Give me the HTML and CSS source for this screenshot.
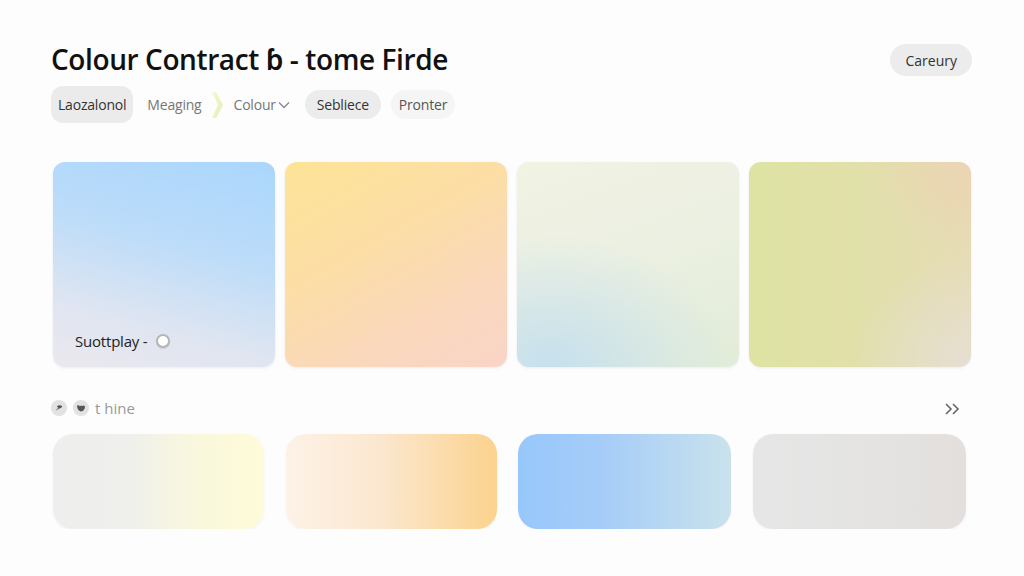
FILE: index.html
```html
<!DOCTYPE html>
<html lang="en">
<head>
<meta charset="UTF-8">
<meta name="viewport" content="width=device-width, initial-scale=1.0">
<title>Colour Contract</title>
<link rel="stylesheet" href="styles.css">
</head>
<body>
<div class="page">
    <div class="header">
        <h1>Colour Contract ɓ - tome Firde</h1>
        <button class="pill-btn">Careury</button>
    </div>

    <div class="tabs">
        <span class="tab tab-active">Laozalonol</span>
        <span class="tab tab-plain">Meaging</span>
        <svg class="tab-arrow" width="14" height="28" viewBox="0 0 14 28">
            <defs>
                <linearGradient id="arrowFill" x1="0" y1="0" x2="1" y2="1">
                    <stop offset="0" stop-color="#f7f9d0"/>
                    <stop offset="1" stop-color="#e4ecb0"/>
                </linearGradient>
            </defs>
            <polygon points="1,1 5,1 12,14 5,27 1,27 7,14" fill="url(#arrowFill)"/>
        </svg>
        <span class="tab tab-plain tab-drop">Colour<svg width="12" height="8" viewBox="0 0 12 8"><polyline points="1,1.5 6,6.5 11,1.5" fill="none" stroke="#888" stroke-width="1.3"/></svg></span>
        <span class="tab tab-soft">Sebliece</span>
        <span class="tab tab-faint">Pronter</span>
    </div>

    <div class="big-cards">
        <div class="card card-sky">
            <div class="card-label">Suottplay -<span class="radio"></span></div>
        </div>
        <div class="card card-sun"></div>
        <div class="card card-mist"></div>
        <div class="card card-olive"></div>
    </div>

    <div class="section-row">
        <div class="section-title">
            <svg class="mini-icon" width="16" height="16" viewBox="0 0 16 16">
                <circle cx="8" cy="8" r="8" fill="#e2e2e2"/>
                <path d="M4.4 11 L7.2 7.8 L5.8 6.2 Q8.6 4.2 11.4 6.2 Q10 8.6 8 8.4 Z" fill="#555"/>
            </svg>
            <svg class="mini-icon" width="16" height="16" viewBox="0 0 16 16">
                <circle cx="8" cy="8" r="8" fill="#e2e2e2"/>
                <path d="M4 5.6 Q5.6 4.4 7 6.4 Q8 4.9 9.3 6 Q11.2 4.5 12 6.6 Q11.6 11.2 8 11.4 Q4.4 11.2 4 5.6 Z" fill="#555"/>
            </svg>
            <span class="section-name">t hine</span>
        </div>
        <svg class="more" width="18" height="14" viewBox="0 0 18 14">
            <polyline points="2,2 7,7 2,12" fill="none" stroke="#666" stroke-width="1.6"/>
            <polyline points="9,2 14,7 9,12" fill="none" stroke="#666" stroke-width="1.6"/>
        </svg>
    </div>

    <div class="small-cards">
        <div class="swatch swatch-lemon"></div>
        <div class="swatch swatch-apricot"></div>
        <div class="swatch swatch-blue"></div>
        <div class="swatch swatch-stone"></div>
    </div>
</div>
</body>
</html>
```

FILE: styles.css
```css
body {
    margin: 0;
    background-color: #fdfdfd;
    font-family: "Open Sans", "Noto Sans", sans-serif;
    color: #222;
}

.page {
    padding: 40px 52px 0 51px;
}

.header {
    display: flex;
    justify-content: space-between;
    align-items: center;
    height: 38px;
}

.header h1 {
    margin: 0;
    font-size: 28px;
    font-weight: 600;
    letter-spacing: -0.4px;
    color: #111;
}

.pill-btn {
    font-family: inherit;
    font-size: 14px;
    color: #333;
    background-color: #ececec;
    border: none;
    border-radius: 16px;
    height: 32px;
    padding: 0 15px;
    margin-top: 2px;
}

.tabs {
    display: flex;
    align-items: center;
    margin-top: 8px;
    height: 37px;
    font-size: 14px;
    letter-spacing: -0.2px;
}

.tab {
    color: #333;
    display: flex;
    align-items: center;
}

.tab-active {
    background-color: #ebebeb;
    border-radius: 12px;
    height: 37px;
    padding: 0 7px;
}

.tab-plain {
    color: #777;
    margin-left: 14px;
}

.tab-arrow {
    margin-left: 9px;
}

.tab-drop {
    margin-left: 9px;
}

.tab-drop svg {
    margin-left: 2px;
}

.tab-soft {
    background-color: #ececec;
    border-radius: 15px;
    height: 29px;
    padding: 0 12px;
    margin-left: 15px;
}

.tab-faint {
    background-color: #f5f5f5;
    border-radius: 15px;
    height: 29px;
    padding: 0 8px;
    margin-left: 10px;
    color: #555;
}

.big-cards {
    display: grid;
    grid-template-columns: repeat(4, 222px);
    gap: 10px;
    margin-top: 39px;
    margin-left: 2px;
}

.card {
    height: 205px;
    border-radius: 12px;
    box-shadow: 0 1px 3px rgba(0, 0, 0, 0.07);
    display: flex;
    align-items: flex-end;
}

.card-sky {
    background: linear-gradient(195deg, #aad6fd 0%, #bcdcf9 40%, #dfe5f1 75%, #ebe8ee 100%);
}

.card-sun {
    background: linear-gradient(150deg, #fde497 0%, #fcdea6 40%, #fad8bb 70%, #f9d4c8 100%);
}

.card-mist {
    background:
        radial-gradient(ellipse 80% 65% at 15% 100%, #c6e0ee 0%, rgba(198, 224, 238, 0) 100%),
        linear-gradient(160deg, #f1f3e3 0%, #ecf0e2 45%, #e1ecd8 100%);
}

.card-olive {
    background:
        radial-gradient(ellipse 55% 55% at 100% 100%, #e5dfd2 0%, rgba(229, 223, 210, 0) 100%),
        radial-gradient(ellipse 45% 45% at 100% 0%, #ecd4b2 0%, rgba(236, 212, 178, 0) 100%),
        linear-gradient(90deg, #dee3a3 0%, #e1e0aa 50%, #e6dcb6 100%);
}

.card-label {
    display: flex;
    align-items: center;
    font-size: 15px;
    letter-spacing: -0.2px;
    color: #222;
    margin: 0 0 16px 22px;
}

.radio {
    width: 10px;
    height: 10px;
    border: 2px solid #b5b5b5;
    border-radius: 50%;
    background-color: #fff;
    margin-left: 9px;
    box-shadow: 0 1px 1px rgba(0, 0, 0, 0.1);
}

.section-row {
    display: flex;
    justify-content: space-between;
    align-items: center;
    margin-top: 31px;
    height: 20px;
    padding-right: 10px;
}

.section-title {
    display: flex;
    align-items: center;
}

.mini-icon {
    margin-right: 6px;
}

.section-name {
    font-size: 15px;
    color: #999;
}

.more {
    margin-top: 2px;
}

.small-cards {
    display: grid;
    grid-template-columns: 211px 211px 213px 213px;
    column-gap: 21.7px;
    margin-top: 16px;
    margin-left: 2px;
}

.swatch {
    height: 95px;
    border-radius: 20px;
    box-shadow: 0 1px 3px rgba(0, 0, 0, 0.05);
}

.swatch-lemon {
    background: linear-gradient(90deg, #eeeeee 0%, #efefec 35%, #faf8dc 70%, #fdfbd8 100%);
}

.swatch-apricot {
    background: linear-gradient(90deg, #fdf2e7 0%, #fbe7cf 45%, #fcd28d 100%);
}

.swatch-blue {
    background: linear-gradient(90deg, #97c7fb 0%, #a6cdf8 40%, #c9e2ec 100%);
}

.swatch-stone {
    background: linear-gradient(90deg, #e6e6e6 0%, #e4e3e2 60%, #e3dfdc 100%);
}
```
